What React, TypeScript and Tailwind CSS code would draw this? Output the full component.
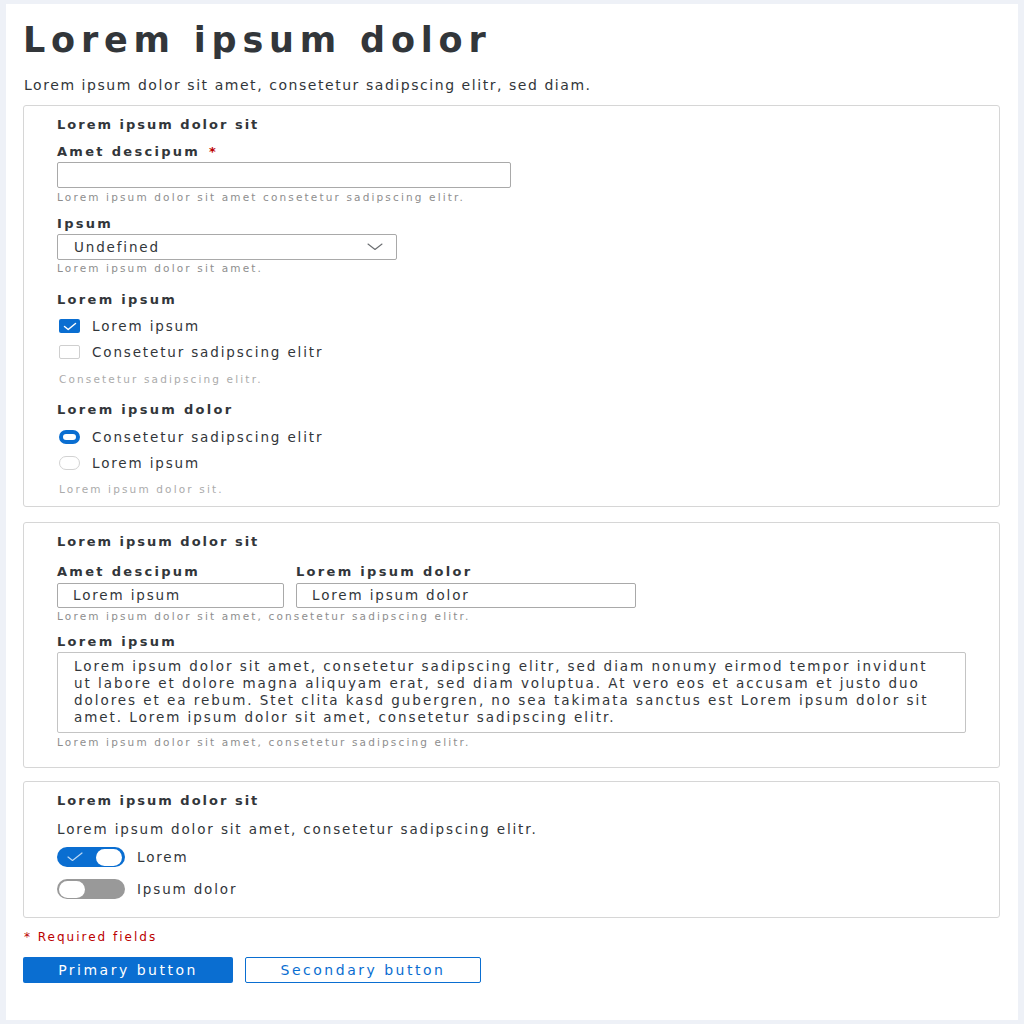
import React from 'react';

const font = "font-['DejaVu_Sans',sans-serif]";

function Card({ children, className = '' }: { children: React.ReactNode; className?: string }) {
  return (
    <div className={`border border-[#d6d6d6] rounded-[3px] bg-white pl-[33px] pr-[33px] ${className}`}>
      {children}
    </div>
  );
}

function Heading({ children }: { children: React.ReactNode }) {
  return <div className="h-[18px] leading-[18px] text-[13px] font-bold tracking-[2px] text-[#32363a]">{children}</div>;
}

function Label({ children, className = '' }: { children: React.ReactNode; className?: string }) {
  return (
    <div className={`h-[18px] leading-[18px] text-[13px] font-bold tracking-[2.3px] text-[#32363a] ${className}`}>
      {children}
    </div>
  );
}

function Helper({ children, className = '', light = false }: { children: React.ReactNode; className?: string; light?: boolean }) {
  return (
    <div
      className={`h-[14px] leading-[14px] text-[10.5px] tracking-[2.15px] ${light ? 'text-[#ababab]' : 'text-[#8e8e8e]'} ${className}`}
    >
      {children}
    </div>
  );
}

const body = 'text-[13.5px] tracking-[1.85px] text-[#32363a]';

function Checkbox({ checked, label, className = '' }: { checked: boolean; label: string; className?: string }) {
  return (
    <div className={`flex items-center h-[20px] ${className}`}>
      <div
        className={`ml-[2px] w-[21px] h-[14px] rounded-[2px] flex items-center justify-center ${
          checked ? 'bg-[#0a6ed1]' : 'bg-white border border-[#cfcfcf]'
        }`}
      >
        {checked && (
          <svg width="14" height="9" viewBox="0 0 14 9" fill="none">
            <path d="M1.5 4.5 L5.2 7.5 L12.5 1.5" stroke="white" strokeWidth="1.5" strokeLinecap="round" strokeLinejoin="round" />
          </svg>
        )}
      </div>
      <span className={`ml-[12px] ${body}`}>{label}</span>
    </div>
  );
}

function Radio({ checked, label, className = '' }: { checked: boolean; label: string; className?: string }) {
  return (
    <div className={`flex items-center h-[20px] ${className}`}>
      <div
        className={`ml-[2px] w-[21px] h-[14px] rounded-full bg-white ${
          checked ? 'border-[4px] border-[#0a6ed1]' : 'border border-[#d2d2d2]'
        }`}
      />
      <span className={`ml-[12px] ${body}`}>{label}</span>
    </div>
  );
}

function Toggle({ on, label, className = '' }: { on: boolean; label: string; className?: string }) {
  return (
    <div className={`flex items-center h-[22px] ${className}`}>
      <div
        className={`relative w-[68px] h-[20px] rounded-full flex items-center ${
          on ? 'bg-[#0a6ed1] justify-end pr-[3px]' : 'bg-[#999999] justify-start pl-[2px]'
        }`}
      >
        {on && (
          <svg className="absolute left-[10px] top-[5px]" width="16" height="10" viewBox="0 0 16 10" fill="none">
            <path d="M1 5 L5.5 8.5 L15 1" stroke="#bcd9f5" strokeWidth="1.2" strokeLinecap="round" strokeLinejoin="round" />
          </svg>
        )}
        <div className="w-[26px] h-[17px] rounded-full bg-white" />
      </div>
      <span className={`ml-[12px] ${body}`}>{label}</span>
    </div>
  );
}

export default function App() {
  return (
    <div className={`min-h-[1024px] bg-[#eef1f7] pt-[4px] pb-[4px] pl-[6px] pr-[6px] ${font}`}>
      <div className="bg-white min-h-[1016px] pl-[17px] pr-[18px] pt-[16px]">
        <h1 className="h-[40px] leading-[40px] text-[35px] font-bold tracking-[5.8px] text-[#32363a]">Lorem ipsum dolor</h1>
        <p className="mt-[16px] h-[18px] leading-[18px] text-[14px] tracking-[1.55px] text-[#32363a] pl-[1px]">
          Lorem ipsum dolor sit amet, consetetur sadipscing elitr, sed diam.
        </p>

        {/* Card 1 */}
        <Card className="mt-[11px] pt-[10px] pb-[10px]">
          <Heading>Lorem ipsum dolor sit</Heading>
          <Label className="mt-[9px]">
            Amet descipum <span className="text-[#bb0000] ml-[2px]">*</span>
          </Label>
          <div className="mt-[1px] w-[454px] h-[26px] border border-[#a9a9a9] rounded-[2px]" />
          <Helper className="mt-[2px]">Lorem ipsum dolor sit amet consetetur sadipscing elitr.</Helper>

          <Label className="mt-[11px]">Ipsum</Label>
          <div className="mt-[1px] w-[340px] h-[26px] border border-[#a9a9a9] rounded-[2px] flex items-center justify-between pl-[16px] pr-[13px]">
            <span className={body}>Undefined</span>
            <svg width="16" height="8" viewBox="0 0 16 8" fill="none">
              <path d="M1 1 L8 6.5 L15 1" stroke="#6a6d70" strokeWidth="1.1" strokeLinecap="round" strokeLinejoin="round" />
            </svg>
          </div>
          <Helper className="mt-[1px]">Lorem ipsum dolor sit amet.</Helper>

          <Label className="mt-[16px]">Lorem ipsum</Label>
          <Checkbox className="mt-[7px]" checked label="Lorem ipsum" />
          <Checkbox className="mt-[6px]" checked={false} label="Consetetur sadipscing elitr" />
          <Helper className="mt-[10px] pl-[2px]" light>
            Consetetur sadipscing elitr.
          </Helper>

          <Label className="mt-[15px]">Lorem ipsum dolor</Label>
          <Radio className="mt-[8px]" checked label="Consetetur sadipscing elitr" />
          <Radio className="mt-[6px]" checked={false} label="Lorem ipsum" />
          <Helper className="mt-[9px] pl-[2px]" light>
            Lorem ipsum dolor sit.
          </Helper>
        </Card>

        {/* Card 2 */}
        <Card className="mt-[15px] pt-[10px] pb-[18px]">
          <Heading>Lorem ipsum dolor sit</Heading>
          <div className="mt-[12px] flex gap-[12px]">
            <div className="w-[227px]">
              <Label>Amet descipum</Label>
              <div className="mt-[2px] h-[25px] border border-[#a9a9a9] rounded-[2px] flex items-center pl-[15px]">
                <span className={body}>Lorem ipsum</span>
              </div>
            </div>
            <div className="w-[340px]">
              <Label>Lorem ipsum dolor</Label>
              <div className="mt-[2px] h-[25px] border border-[#a9a9a9] rounded-[2px] flex items-center pl-[15px]">
                <span className={body}>Lorem ipsum dolor</span>
              </div>
            </div>
          </div>
          <Helper className="mt-[1px]">Lorem ipsum dolor sit amet, consetetur sadipscing elitr.</Helper>

          <Label className="mt-[10px]">Lorem ipsum</Label>
          <div className="mt-[1px] w-[909px] h-[81px] border border-[#c4c4c4] rounded-[2px] pl-[16px] pt-[5px] text-[13.5px] leading-[17px] tracking-[1.95px] text-[#32363a]">
            <div>Lorem ipsum dolor sit amet, consetetur sadipscing elitr, sed diam nonumy eirmod tempor invidunt</div>
            <div>ut labore et dolore magna aliquyam erat, sed diam voluptua. At vero eos et accusam et justo duo</div>
            <div>dolores et ea rebum. Stet clita kasd gubergren, no sea takimata sanctus est Lorem ipsum dolor sit</div>
            <div>amet. Lorem ipsum dolor sit amet, consetetur sadipscing elitr.</div>
          </div>
          <Helper className="mt-[2px]">Lorem ipsum dolor sit amet, consetetur sadipscing elitr.</Helper>
        </Card>

        {/* Card 3 */}
        <Card className="mt-[13px] pt-[10px] pb-[17px]">
          <Heading>Lorem ipsum dolor sit</Heading>
          <div className={`mt-[10px] h-[18px] leading-[18px] ${body}`}>
            Lorem ipsum dolor sit amet, consetetur sadipscing elitr.
          </div>
          <Toggle className="mt-[8px]" on label="Lorem" />
          <Toggle className="mt-[10px]" on={false} label="Ipsum dolor" />
        </Card>

        <div className="mt-[12px] h-[14px] leading-[14px] text-[12px] tracking-[2px] text-[#bb0000] pl-[1px]">* Required fields</div>

        <div className="mt-[13px] flex gap-[12px]">
          <button className="w-[210px] h-[26px] rounded-[2px] bg-[#0a6ed1] text-white text-[14px] tracking-[2.5px]">
            Primary button
          </button>
          <button className="w-[236px] h-[26px] rounded-[2px] bg-white border border-[#0a6ed1] text-[#0a6ed1] text-[14px] tracking-[2.5px]">
            Secondary button
          </button>
        </div>
      </div>
    </div>
  );
}
